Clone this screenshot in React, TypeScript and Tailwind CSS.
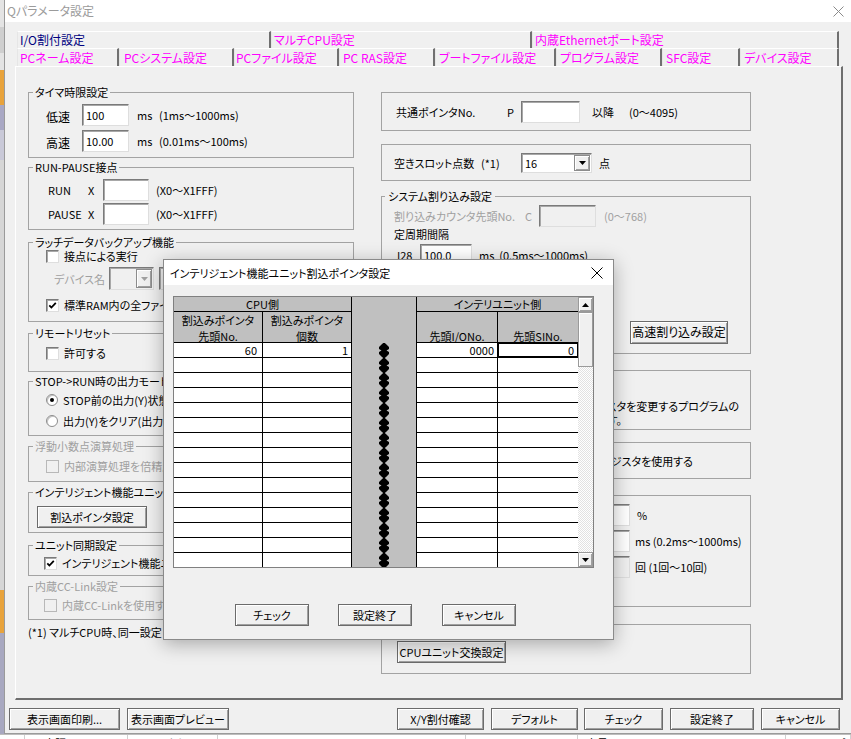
import React from "react";

const btn3d =
  "flex items-center justify-center border border-[#6b6b6b] bg-[#f0f0f0] shadow-[inset_1px_1px_0_#ffffff,inset_-1px_-1px_0_#a0a0a0] whitespace-nowrap";
const sunken =
  "border border-t-[#7a7a7a] border-l-[#7a7a7a] border-r-[#dedede] border-b-[#dedede] shadow-[inset_1px_1px_0_#a8a8a8]";
const gray = "text-[#a0a0a0]";

function TextBox({ className = "", value = "", disabled = false }: { className?: string; value?: string; disabled?: boolean }) {
  return (
    <div className={`flex items-center pl-[3px] whitespace-nowrap ${sunken} ${disabled ? "bg-[#f0f0f0]" : "bg-white"} ${className}`}>
      {value}
    </div>
  );
}

function Check({ checked = false, disabled = false }: { checked?: boolean; disabled?: boolean }) {
  return (
    <span
      className={`flex items-center justify-center w-[13px] h-[13px] shrink-0 border ${
        disabled
          ? "border-[#b8b8b8] bg-[#f0f0f0]"
          : "border-t-[#7a7a7a] border-l-[#7a7a7a] border-r-[#dedede] border-b-[#dedede] shadow-[inset_1px_1px_0_#a8a8a8] bg-white"
      }`}
    >
      {checked && (
        <svg width="9" height="9" viewBox="0 0 9 9">
          <path d="M1.3 4.3 L3.4 6.5 L7.8 1.8" fill="none" stroke="#000" strokeWidth="1.8" />
        </svg>
      )}
    </span>
  );
}

function Radio({ checked = false }: { checked?: boolean }) {
  return (
    <span className="flex items-center justify-center w-[12px] h-[12px] shrink-0 rounded-full border border-[#8c8c8c] bg-white shadow-[inset_1px_1px_0_#c4c4c4]">
      {checked && <span className="w-[4px] h-[4px] rounded-full bg-black" />}
    </span>
  );
}

function Combo({ className = "", value = "", disabled = false }: { className?: string; value?: string; disabled?: boolean }) {
  return (
    <div className={`flex items-stretch p-[1px] ${sunken} ${disabled ? "bg-[#f0f0f0]" : "bg-white"} ${className}`}>
      <span className="flex-1 flex items-center pl-[2px]">{value}</span>
      <span className="w-[16px] flex items-center justify-center border border-[#8c8c8c] bg-[#f0f0f0] shadow-[inset_1px_1px_0_#ffffff,inset_-1px_-1px_0_#a0a0a0]">
        <svg width="7" height="4" viewBox="0 0 7 4">
          <path d="M0 0H7L3.5 4Z" fill={disabled ? "#a0a0a0" : "#000"} />
        </svg>
      </span>
    </div>
  );
}

function Group({
  title,
  disabled = false,
  className = "",
  legendClass = "ml-[4px] px-[2px]",
  children,
}: {
  title: string;
  disabled?: boolean;
  className?: string;
  legendClass?: string;
  children?: React.ReactNode;
}) {
  return (
    <fieldset className={`border border-[#a3a3a3] min-w-0 ${className}`}>
      <legend className={`leading-[14px] whitespace-nowrap ${legendClass} ${disabled ? gray : ""}`}>{title}</legend>
      {children}
    </fieldset>
  );
}

function Box({ className = "", children }: { className?: string; children?: React.ReactNode }) {
  return <div className={`border border-[#a3a3a3] ${className}`}>{children}</div>;
}

function CheckRow({ className = "", label, checked, disabled }: { className?: string; label: string; checked?: boolean; disabled?: boolean }) {
  return (
    <div className={`flex items-center h-[14px] whitespace-nowrap ${className}`}>
      <Check checked={checked} disabled={disabled} />
      <span className={`ml-[5px] ${disabled ? gray : ""}`}>{label}</span>
    </div>
  );
}

function LeftColumn() {
  return (
    <div className="w-[326px] shrink-0 pt-[18px] flex flex-col">
      <Group title="タイマ時限設定" className="h-[73px]">
        <div className="pt-[5px] pl-[17px] flex flex-col gap-[4px]">
          <div className="flex items-center h-[22px] whitespace-nowrap">
            <span className="w-[36px] pt-[4px] text-[12px]">低速</span>
            <TextBox className="w-[47px] h-[22px]" value="100" />
            <span className="ml-[8px] w-[22px]">ms</span>
            <span>(1ms～1000ms)</span>
          </div>
          <div className="flex items-center h-[22px] whitespace-nowrap">
            <span className="w-[36px] pt-[4px] text-[12px]">高速</span>
            <TextBox className="w-[47px] h-[22px]" value="10.00" />
            <span className="ml-[8px] w-[22px]">ms</span>
            <span>(0.01ms～100ms)</span>
          </div>
        </div>
      </Group>

      <Group title="RUN-PAUSE接点" className="mt-[2px] h-[70px]">
        <div className="pt-[5px] pl-[19px] flex flex-col gap-[2px]">
          <div className="flex items-center h-[22px] whitespace-nowrap">
            <span className="w-[40px]">RUN</span>
            <span className="w-[15px]">X</span>
            <TextBox className="w-[46px] h-[22px]" />
            <span className="ml-[7px]">(X0～X1FFF)</span>
          </div>
          <div className="flex items-center h-[22px] whitespace-nowrap">
            <span className="w-[40px]">PAUSE</span>
            <span className="w-[15px]">X</span>
            <TextBox className="w-[46px] h-[22px]" />
            <span className="ml-[7px]">(X0～X1FFF)</span>
          </div>
        </div>
      </Group>

      <Group title="ラッチデータバックアップ機能" className="mt-[5px] h-[87px]">
        <CheckRow className="pl-[17px]" label="接点による実行" />
        <div className="mt-[4px] h-[23px] pl-[25px] flex items-center whitespace-nowrap">
          <span className={`w-[55px] ${gray}`}>デバイス名</span>
          <Combo className="w-[45px] h-[23px]" disabled />
          <TextBox className="ml-[5px] w-[60px] h-[23px]" disabled />
        </div>
        <CheckRow className="mt-[8px] pl-[17px]" label="標準RAM内の全ファイル" checked />
      </Group>

      <Group title="リモートリセット" className="mt-[4px] h-[46px]">
        <CheckRow className="mt-[6px] pl-[17px]" label="許可する" />
      </Group>

      <Group title="STOP->RUN時の出力モード" className="mt-[2px] h-[62px]">
        <div className="mt-[5px] pl-[17px] h-[14px] flex items-center whitespace-nowrap">
          <Radio checked />
          <span className="ml-[5px]">STOP前の出力(Y)状態</span>
        </div>
        <div className="mt-[7px] pl-[17px] h-[14px] flex items-center whitespace-nowrap">
          <Radio />
          <span className="ml-[5px]">出力(Y)をクリア(出力</span>
        </div>
      </Group>

      <Group title="浮動小数点演算処理" disabled className="mt-[3px] h-[43px]">
        <CheckRow className="mt-[6px] pl-[17px]" label="内部演算処理を倍精度" disabled />
      </Group>

      <Group title="インテリジェント機能ユニット設定" className="mt-[3px] h-[48px]">
        <div className={`mt-[7px] ml-[8px] w-[110px] h-[22px] ${btn3d}`}>割込ポインタ設定</div>
      </Group>

      <Group title="ユニット同期設定" className="mt-[5px] h-[38px]">
        <CheckRow className="mt-[4px] pl-[15px]" label="インテリジェント機能ユニット" checked />
      </Group>

      <Group title="内蔵CC-Link設定" disabled className="mt-[3px] h-[41px]">
        <CheckRow className="mt-[5px] pl-[15px]" label="内蔵CC-Linkを使用する" disabled />
      </Group>

      <div className="mt-[5px] h-[14px] whitespace-nowrap">(*1) マルチCPU時、同一設定</div>
    </div>
  );
}

function RightColumn() {
  return (
    <div className="ml-[27px] w-[370px] shrink-0 pt-[25px] flex flex-col">
      <Box className="h-[39px] flex items-center pl-[14px] whitespace-nowrap">
        <span className="w-[111px]">共通ポインタNo.</span>
        <span className="w-[14px]">P</span>
        <TextBox className="w-[59px] h-[22px]" />
        <span className="ml-[12px] w-[37px]">以降</span>
        <span>(0～4095)</span>
      </Box>

      <Box className="mt-[13px] h-[37px] flex items-center pl-[12px] whitespace-nowrap">
        <span className="w-[87px]">空きスロット点数</span>
        <span className="w-[40px]">(*1)</span>
        <Combo className="w-[71px] h-[20px]" value="16" />
        <span className="ml-[7px]">点</span>
      </Box>

      <Group title="システム割り込み設定" className="mt-[8px] h-[165px]" legendClass="ml-[3px] px-[3px]">
        <div className="mt-[2px] h-[22px] pl-[12px] flex items-center whitespace-nowrap">
          <span className={`w-[131px] ${gray}`}>割り込みカウンタ先頭No.</span>
          <span className={`w-[14px] ${gray}`}>C</span>
          <TextBox className="w-[57px] h-[22px]" disabled />
          <span className={`ml-[8px] ${gray}`}>(0～768)</span>
        </div>
        <div className="h-[14px] pl-[12px] flex items-center">定周期間隔</div>
        <div className="mt-[3px] h-[22px] pl-[15px] flex items-center whitespace-nowrap">
          <span className="w-[23px]">I28</span>
          <TextBox className="w-[52px] h-[22px]" value="100.0" />
          <span className="ml-[7px]">ms&nbsp;&nbsp;(0.5ms～1000ms)</span>
        </div>
        <div className="mt-[4px] h-[22px] pl-[38px] flex items-center">
          <TextBox className="w-[52px] h-[22px]" />
        </div>
        <div className="mt-[4px] h-[22px] pl-[38px] flex items-center">
          <TextBox className="w-[52px] h-[22px]" />
        </div>
        <div className="mt-[4px] h-[22px] pl-[38px] flex items-center">
          <TextBox className="w-[52px] h-[22px]" />
          <div className={`ml-auto mr-[22px] w-[98px] h-[23px] mt-[-2px] text-[12px] ${btn3d}`}>高速割り込み設定</div>
        </div>
      </Group>

      <Box className="mt-[16px] h-[60px] flex flex-col items-end pt-[28px]">
        <div className="pr-[11px] whitespace-nowrap">レジスタを変更するプログラムの</div>
        <div className="pr-[128px] whitespace-nowrap">す。</div>
      </Box>

      <Box className="mt-[12px] h-[37px] flex items-center justify-end pr-[57px]">
        <span className="whitespace-nowrap">レジスタを使用する</span>
      </Box>

      <Box className="mt-[16px] h-[112px] flex flex-col">
        <div className="mt-[8px] h-[22px] pl-[198px] flex items-center whitespace-nowrap">
          <TextBox className="w-[50px] h-[22px]" />
          <span className="ml-[7px]">%</span>
        </div>
        <div className="mt-[4px] h-[22px] pl-[198px] flex items-center whitespace-nowrap">
          <TextBox className="w-[50px] h-[22px]" />
          <span className="ml-[5px]">ms (0.2ms～1000ms)</span>
        </div>
        <div className="mt-[4px] h-[22px] pl-[198px] flex items-center whitespace-nowrap">
          <TextBox className="w-[50px] h-[22px]" disabled />
          <span className="ml-[5px]">回 (1回～10回)</span>
        </div>
      </Box>

      <Box className="mt-[17px] h-[50px]">
        <div className={`mt-[16px] ml-[15px] w-[109px] h-[22px] ${btn3d}`}>CPUユニット交換設定</div>
      </Box>
    </div>
  );
}

const row1 = [
  { t: "I/O割付設定", w: "w-[254px]", c: "text-[#000080]" },
  { t: "マルチCPU設定", w: "w-[261px]", c: "text-[#ff00ff]" },
  { t: "内蔵Ethernetポート設定", w: "w-[307px]", c: "text-[#ff00ff]" },
];
const row2 = [
  { t: "PCネーム設定", w: "w-[102px]", p: "pl-[2px]" },
  { t: "PCシステム設定", w: "w-[115px]", p: "pl-[4px]" },
  { t: "PCファイル設定", w: "w-[105px]", p: "pl-[1px]" },
  { t: "PC RAS設定", w: "w-[96px]", p: "pl-[3px]" },
  { t: "ブートファイル設定", w: "w-[121px]", p: "pl-[3px]" },
  { t: "プログラム設定", w: "w-[106px]", p: "pl-[3px]" },
  { t: "SFC設定", w: "w-[78px]", p: "pl-[3px]" },
  { t: "デバイス設定", w: "w-[99px]", p: "pl-[3px]" },
];

function Tabs() {
  return (
    <div className="ml-[12px] mt-[9px] w-[822px] flex flex-col text-[12px]">
      <div className="h-[17px] flex">
        {row1.map((t) => (
          <div
            key={t.t}
            className={`${t.w} ${t.c} h-full flex items-center pl-[2px] border-t border-l border-t-white border-l-[#e6e6e6] border-r-2 border-r-[#707070] whitespace-nowrap overflow-hidden`}
          >
            {t.t}
          </div>
        ))}
      </div>
      <div className="h-[18px] flex">
        {row2.map((t) => (
          <div
            key={t.t}
            className={`${t.w} ${t.p} text-[#ff00ff] h-full flex items-center border-t border-l border-t-white border-l-[#e6e6e6] border-r-2 border-r-[#707070] whitespace-nowrap overflow-hidden`}
          >
            {t.t}
          </div>
        ))}
      </div>
    </div>
  );
}

function Glyph() {
  return (
    <svg width="12" height="15" viewBox="0 0 12 15">
      <rect x="5" y="0" width="2" height="15" fill="#000" />
      <path
        d="M4.5 0.5 L7.5 0.5 L11 4 L11 6 L8.5 7.5 L11 9 L11 11 L7.5 14.5 L4.5 14.5 L1 11 L1 9 L3.5 7.5 L1 6 L1 4 Z"
        fill="#000"
      />
    </svg>
  );
}

function Scrollbar() {
  return (
    <div className="w-[15px] flex flex-col">
      <div className={`h-[15px] ${btn3d} border-[#9a9a9a]`}>
        <svg width="7" height="4" viewBox="0 0 7 4">
          <path d="M0 4H7L3.5 0Z" fill="#000" />
        </svg>
      </div>
      <div className="h-[55px] border border-[#9a9a9a] bg-[#f0f0f0] shadow-[inset_1px_1px_0_#ffffff]" />
      <div className="flex-1 [background-image:repeating-conic-gradient(#e2e2e2_0_25%,#ffffff_0_50%)] [background-size:2px_2px]" />
      <div className={`h-[15px] ${btn3d} border-[#9a9a9a]`}>
        <svg width="7" height="4" viewBox="0 0 7 4">
          <path d="M0 0H7L3.5 4Z" fill="#000" />
        </svg>
      </div>
    </div>
  );
}

const rows = Array.from({ length: 15 }, (_, i) => i);

function Dialog() {
  return (
    <div className="absolute left-[163px] top-[259px] w-[451px] h-[381px] bg-[#f0f0f0] border border-[#8a8a8a] shadow-[0_4px_18px_rgba(0,0,0,0.3)] flex flex-col">
      <div className="h-[25px] bg-white flex items-center pl-[6px] pr-[10px]">
        <span className="whitespace-nowrap">インテリジェント機能ユニット割込ポインタ設定</span>
        <svg className="ml-auto" width="12" height="12" viewBox="0 0 12 12">
          <path d="M0.5 0.5 L11.5 11.5 M11.5 0.5 L0.5 11.5" stroke="#000" strokeWidth="1" />
        </svg>
      </div>
      <div className="ml-[9px] mt-[11px] w-[421px] h-[272px] border border-[#808080] flex overflow-hidden">
        <div className="w-[178px] border-r border-black flex flex-col">
          <div className="h-[15px] shrink-0 border-b border-black bg-[#c0c0c0] flex items-center justify-center">CPU側</div>
          <div className="h-[31px] shrink-0 border-b border-black bg-[#c0c0c0] flex leading-[16px]">
            <div className="w-[89px] border-r border-black flex flex-col items-center">
              <span>割込みポインタ</span>
              <span>先頭No.</span>
            </div>
            <div className="w-[88px] flex flex-col items-center">
              <span>割込みポインタ</span>
              <span>個数</span>
            </div>
          </div>
          {rows.map((i) => (
            <div key={i} className="h-[15px] shrink-0 border-b border-black bg-white flex">
              <div className="w-[89px] border-r border-black flex items-center justify-end pr-[5px]">{i === 0 ? "60" : ""}</div>
              <div className="w-[88px] flex items-center justify-end pr-[3px]">{i === 0 ? "1" : ""}</div>
            </div>
          ))}
        </div>
        <div className="w-[65px] border-r border-black bg-[#c0c0c0] flex flex-col items-center">
          <div className="h-[46px] shrink-0" />
          {rows.map((i) => (
            <div key={i} className="h-[15px] shrink-0 flex items-center justify-center">
              <Glyph />
            </div>
          ))}
        </div>
        <div className="w-[161px] flex flex-col">
          <div className="h-[15px] shrink-0 border-b border-black bg-[#c0c0c0] flex items-center justify-center whitespace-nowrap">インテリユニット側</div>
          <div className="h-[31px] shrink-0 border-b border-black bg-[#c0c0c0] flex leading-[16px]">
            <div className="w-[81px] border-r border-black flex flex-col items-center pt-[16px]">先頭I/ONo.</div>
            <div className="w-[80px] flex flex-col items-center pt-[16px]">先頭SINo.</div>
          </div>
          {rows.map((i) => (
            <div key={i} className="h-[15px] shrink-0 border-b border-black bg-white flex">
              <div className="w-[81px] border-r border-black flex items-center justify-end pr-[3px]">{i === 0 ? "0000" : ""}</div>
              <div className={`w-[80px] flex items-center justify-end pr-[4px] ${i === 0 ? "shadow-[inset_0_0_0_1px_#000]" : ""}`}>
                {i === 0 ? "0" : ""}
              </div>
            </div>
          ))}
        </div>
        <Scrollbar />
      </div>
      <div className="mt-[36px] flex h-[22px]">
        <div className={`ml-[71px] w-[74px] h-[22px] ${btn3d}`}>チェック</div>
        <div className={`ml-[29px] w-[74px] h-[22px] ${btn3d}`}>設定終了</div>
        <div className={`ml-[30px] w-[74px] h-[22px] ${btn3d}`}>キャンセル</div>
      </div>
    </div>
  );
}

function LeftStrip() {
  return (
    <div className="w-[5px] shrink-0 flex flex-col border-r border-[#9a9a9a]">
      <div className="h-[27px] bg-[#e4e4e4]" />
      <div className="h-[26px] bg-[#cfcfcf]" />
      <div className="h-[17px] bg-[#e4e4e4]" />
      <div className="h-[35px] bg-[#e8a33c]" />
      <div className="h-[25px] bg-[#a9a8c4]" />
      <div className="h-[30px] bg-[#c9c9d8]" />
      <div className="h-[430px] bg-[#d6d6d6]" />
      <div className="h-[43px] bg-[#e8a33c]" />
      <div className="flex-1 bg-[#a8a8c0]" />
    </div>
  );
}

function BottomStrip() {
  const cells = [
    { w: "w-[25px]", t: "" },
    { w: "w-[103px]", t: "日本語" },
    { w: "w-[90px]", t: "ラベルなし" },
    { w: "w-[248px]", t: "" },
    { w: "w-[112px]", t: "Q03UDV" },
    { w: "w-[208px]", t: "未見" },
    { w: "w-[65px]", t: "00/00 スプール" },
  ];
  return (
    <div className="h-[5px] bg-white border-t border-[#bdbdbd] flex overflow-hidden">
      {cells.map((c, i) => (
        <div key={i} className={`${c.w} shrink-0 border-r border-[#d0d0d0] pl-[8px] pt-[1px] whitespace-nowrap overflow-hidden`}>
          {c.t}
        </div>
      ))}
    </div>
  );
}

export default function App() {
  return (
    <div className="relative w-[851px] h-[739px] overflow-hidden bg-[#f0f0f0] text-black text-[11px] leading-[14px] [font-feature-settings:'palt'] font-['Noto_Sans_CJK_JP',sans-serif] flex flex-col">
      <div className="h-[734px] flex">
        <LeftStrip />
        <div className="flex-1 flex flex-col bg-[#f0f0f0] border-b border-[#9a9a9a]">
          <div className="h-[22px] shrink-0 bg-white flex items-center pl-[2px] pr-[7px]">
            <span className="text-[#9b9b9b] text-[12px]">Qパラメータ設定</span>
            <svg className="ml-auto" width="11" height="11" viewBox="0 0 11 11">
              <path d="M0.5 0.5 L10.5 10.5 M10.5 0.5 L0.5 10.5" stroke="#8a8a8a" strokeWidth="1" />
            </svg>
          </div>
          <Tabs />
          <div className="ml-[10px] w-[828px] h-[634px] shrink-0 border border-t-white border-l-white border-r-2 border-b-2 border-r-[#6e6e6e] border-b-[#6e6e6e] flex pl-[12px]">
            <LeftColumn />
            <RightColumn />
          </div>
          <div className="mt-[8px] h-[22px] flex pl-[4px] pr-[11px]">
            <div className={`w-[111px] h-[22px] ${btn3d}`}>表示画面印刷...</div>
            <div className={`ml-[7px] w-[102px] h-[22px] ${btn3d}`}>表示画面プレビュー</div>
            <div className={`ml-auto w-[87px] h-[22px] ${btn3d}`}>X/Y割付確認</div>
            <div className={`ml-[7px] w-[87px] h-[22px] ${btn3d}`}>デフォルト</div>
            <div className={`ml-[6px] w-[79px] h-[22px] ${btn3d}`}>チェック</div>
            <div className={`ml-[7px] w-[84px] h-[22px] ${btn3d}`}>設定終了</div>
            <div className={`ml-[7px] w-[79px] h-[22px] ${btn3d}`}>キャンセル</div>
          </div>
        </div>
      </div>
      <BottomStrip />
      <Dialog />
    </div>
  );
}
